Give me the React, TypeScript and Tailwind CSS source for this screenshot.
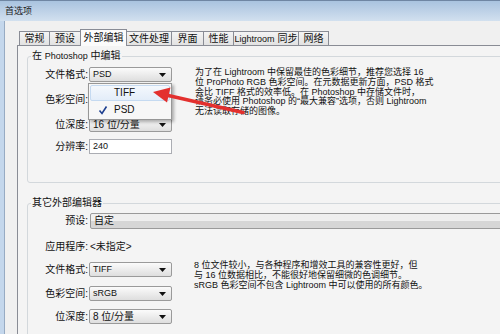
import React from 'react';

const tabs: { label: string; w: string; active?: boolean; last?: boolean; afterActive?: boolean }[] = [
  { label: '常规', w: 'w-[30px]' },
  { label: '预设', w: 'w-[31px]' },
  { label: '外部编辑', w: 'w-[47px]', active: true },
  { label: '文件处理', w: 'w-[44px]', afterActive: true },
  { label: '界面', w: 'w-[32px]' },
  { label: '性能', w: 'w-[30px]' },
  { label: 'Lightroom 同步', w: 'w-[65px]' },
  { label: '网络', w: 'w-[31px]', last: true },
];

const DownArrow = () => (
  <svg width="7" height="4" viewBox="0 0 7 4" className="shrink-0">
    <path d="M0 0h7L3.5 4z" fill="#111" />
  </svg>
);

const Combo = ({ value, className = 'w-[83px]', text = 'text-[9px]' }: { value: string; className?: string; text?: string }) => (
  <div
    className={`flex h-[15px] items-center justify-between rounded-[2px] border border-[#9a9a9a] bg-gradient-to-b from-[#fbfbfb] to-[#dedede] pl-[3px] pr-[5px] leading-none text-[#111] ${text} ${className}`}
  >
    <span>{value}</span>
    <DownArrow />
  </div>
);

const Row = ({ label, children, className = '' }: { label: string; children: React.ReactNode; className?: string }) => (
  <div className={`flex h-[15px] items-center ${className}`}>
    <div className="w-[57px] text-right text-[10px] leading-none text-[#111]">{label}</div>
    <div className="ml-[1px] flex items-center">{children}</div>
  </div>
);

const Desc = ({ lines, className = '' }: { lines: string[]; className?: string }) => (
  <div className={`text-[9px] leading-[9.75px] text-[#111] ${className}`}>
    {lines.map((l, i) => (
      <div key={i} className="whitespace-nowrap">{l}</div>
    ))}
  </div>
);

export default function App() {
  return (
    <div className="relative flex h-[334px] w-[500px] flex-col overflow-hidden bg-[#c4d7ec] font-[family-name:'Liberation_Sans','Noto_Sans_CJK_SC',sans-serif]">
      {/* title bar */}
      <div className="flex h-[21px] shrink-0 items-center border-t border-[#6f86a3] bg-gradient-to-b from-[#a9c3df] to-[#d2e0ef] pl-[5px]">
        <span className="text-[9px] leading-none text-[#1b1b1b]">首选项</span>
      </div>

      {/* window body */}
      <div className="ml-[4px] flex flex-1 flex-col border-l border-[#97abc3] bg-[#f0f0f0] pl-[12px] pt-[8px]">
        {/* tabs */}
        <div className="ml-[2px] flex h-[16px] items-end">
          {tabs.map((t) =>
            t.active ? (
              <div
                key={t.label}
                className={`relative z-10 -mb-px flex h-[17px] items-center justify-center border-x border-t border-[#898c95] bg-[#fbfbfb] text-[10px] leading-none text-[#111] ${t.w}`}
              >
                {t.label}
              </div>
            ) : (
              <div
                key={t.label}
                className={`flex h-[14px] items-center justify-center border-t border-[#898c95] bg-gradient-to-b from-[#f4f4f4] to-[#e2e2e2] text-[10px] leading-none text-[#111] ${t.w} ${t.afterActive ? '' : 'border-l'} ${t.last ? 'border-r' : ''}`}
              >
                {t.label === 'Lightroom 同步' ? (
                  <span>
                    <span className="text-[9px]">Lightroom</span> 同步
                  </span>
                ) : (
                  t.label
                )}
              </div>
            )
          )}
        </div>

        {/* tab panel */}
        <div className="flex w-[600px] flex-1 flex-col border-l border-t border-[#898c95] bg-[#f4f4f4] pl-[9px] pt-[4px]">
          <fieldset className="w-[560px] rounded-[3px] border border-[#d3d8dc] pb-[28px] pl-[3px]">
            <legend className="px-[1px] text-[10px] leading-[12px] text-[#111]">
              在 <span className="text-[9px]">Photoshop</span> 中编辑
            </legend>
            <div className="flex items-start pt-[5px]">
              <div className="flex flex-col">
                <Row label="文件格式:">
                  <Combo value="PSD" />
                </Row>
                <Row label="色彩空间:" className="mt-[10px]">
                  <Combo value="" />
                </Row>
                <Row label="位深度:" className="mt-[10px]">
                  <Combo value="16 位/分量" text="text-[10px]" />
                </Row>
                <Row label="分辨率:" className="mt-[7px]">
                  <div className="flex h-[15px] w-[83px] items-center border border-[#abadb3] bg-white pl-[3px] text-[9px] leading-none text-[#111]">
                    240
                  </div>
                </Row>
              </div>
              <Desc
                className="ml-[23px] mt-[1px]"
                lines={[
                  '为了在 Lightroom 中保留最佳的色彩细节，推荐您选择 16',
                  '位 ProPhoto RGB 色彩空间。在元数据更新方面，PSD 格式',
                  '会比 TIFF 格式的效率低。在 Photoshop 中存储文件时，',
                  '请务必使用 Photoshop 的“最大兼容”选项，否则 Lightroom',
                  '无法读取存储的图像。',
                ]}
              />
            </div>
          </fieldset>

          <fieldset className="mt-[14px] w-[560px] rounded-[3px] border border-[#d3d8dc] pb-[20px] pl-[3px]">
            <legend className="px-[1px] text-[10px] leading-[12px] text-[#111]">其它外部编辑器</legend>
            <div className="flex flex-col pt-[4px]">
              <Row label="预设:">
                <div className="ml-[1px] flex h-[16px] w-[460px] items-center rounded-[2px] border border-[#9a9a9a] bg-gradient-to-b from-[#efefef] from-50% to-[#d6d6d6] to-50% pl-[3px] text-[10px] leading-none text-[#111]">
                  自定
                </div>
              </Row>
              <Row label="应用程序:" className="mt-[11px]">
                <span className="ml-[1px] text-[10px] leading-none text-[#111]">&lt;未指定&gt;</span>
              </Row>
              <div className="mt-[8px] flex items-start">
                <div className="flex flex-col">
                  <Row label="文件格式:">
                    <Combo value="TIFF" />
                  </Row>
                  <Row label="色彩空间:" className="mt-[9px]">
                    <Combo value="sRGB" />
                  </Row>
                  <Row label="位深度:" className="mt-[8px]">
                    <Combo value="8 位/分量" text="text-[10px]" />
                  </Row>
                </div>
                <Desc
                  className="ml-[22px] mt-[-1px]"
                  lines={[
                    '8 位文件较小，与各种程序和增效工具的兼容性更好，但',
                    '与 16 位数据相比，不能很好地保留细微的色调细节。',
                    'sRGB 色彩空间不包含 Lightroom 中可以使用的所有颜色。',
                  ]}
                />
              </div>
            </div>
          </fieldset>
        </div>
      </div>

      {/* open dropdown menu */}
      <div className="absolute left-[88px] top-[83px] flex h-[37px] w-[84px] flex-col border border-[#979797] bg-[#f7f7f7] p-[1px] shadow-[2px_2px_3px_rgba(0,0,0,0.3)]">
        <div className="flex h-[16px] items-center rounded-[2px] border border-[#c5daf1] bg-gradient-to-b from-[#f4f8fd] to-[#e3edf9] pl-[23px] text-[10px] leading-none text-[#111]">
          TIFF
        </div>
        <div className="flex h-[17px] items-center text-[10px] leading-none text-[#111]">
          <svg width="10" height="10" viewBox="0 0 10 10" className="ml-[8px] mr-[6px]">
            <path d="M1.5 5.5L4 8.5L8.5 1.5" fill="none" stroke="#1d3f8f" strokeWidth="1.6" />
          </svg>
          PSD
        </div>
      </div>

      {/* red annotation arrow */}
      <svg className="pointer-events-none absolute left-0 top-0" width="500" height="334" viewBox="0 0 500 334">
        <path d="M243 112.5 L166 95" stroke="#e3302e" strokeWidth="3.5" strokeLinecap="round" />
        <path d="M153 92 L170.5 87.5 L167 102.5 Z" fill="#e3302e" />
      </svg>
    </div>
  );
}
